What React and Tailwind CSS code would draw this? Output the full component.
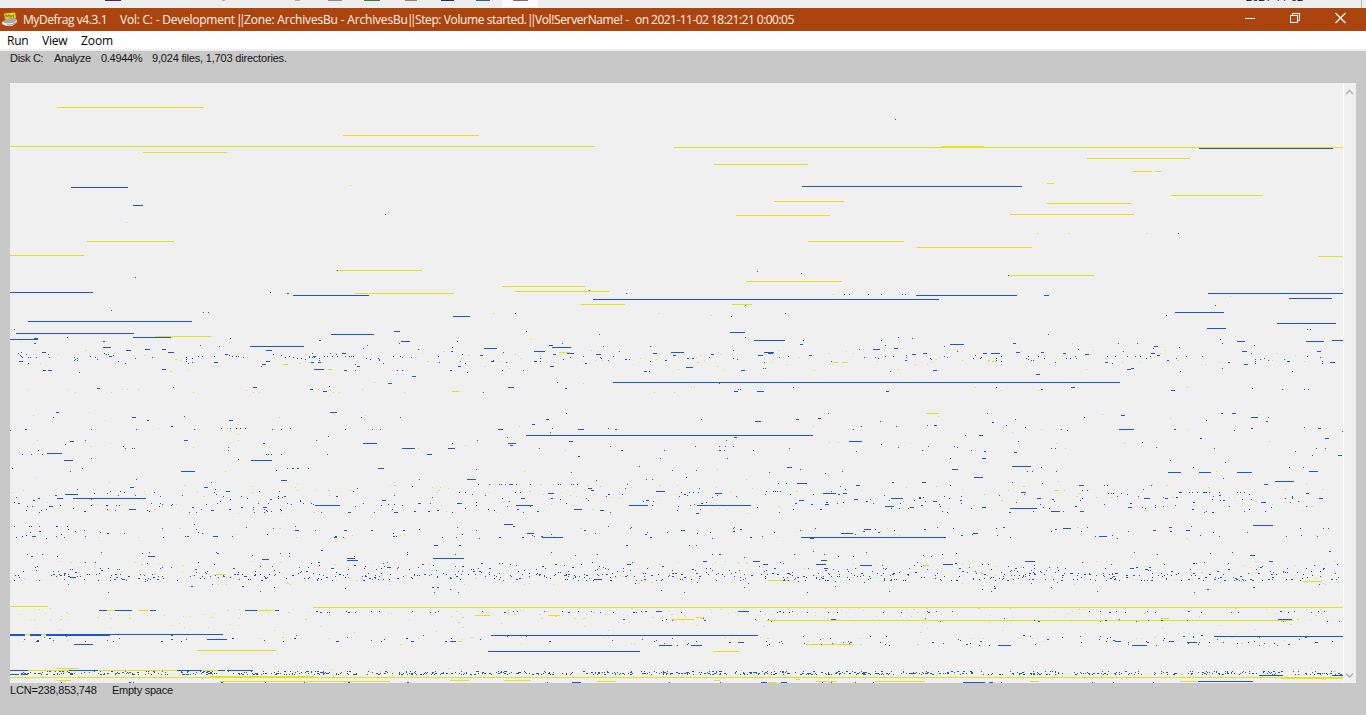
import React from "react";

/* Coordinates are in thirds of a pixel, relative to each tile's origin.
   A row is "y:mark,mark,..."; a mark is either a point or a start-end run. */
const tiles = [
  {
    x: 0,
    y: 280,
    blue: `37:30-279,811;40:861-867;46:879-1107;91:334;97:610,625;109:1359-1380;124:84-576;148:43;154:1182-1199;160:48-402;163:993-1122;172:202,399-513;175:690;178:30-114;176:102-114;181:957-963;184:309-316,1203-1230;190:102-108,1198;196:601,1102;199:658,750-912;202:309-333;205:1091;208:435-450,487-500,1255;211:379-393,798-816;214:1355;217:63,126-138,505-522;220:54,312,936,990,1026-1038;223:78,144,318,324,675-684,819,1010;226:60,339,687,843;229:63,271,327-336,595,606,643,697,709,715,867,927,939-948,972,981,996,1011,1035,1047,1053,1059,1180,1201,1315;232:66,84,90,108,147,222,285,457,558,729,855,880,927,937,942,1206,1234;235:231,406,577,891,903,957,1098,1135;238:225,291,559,915,1111,1137;241:222,231,957,1138;244:57-69,354,559,798-810;247:576,642-654,933-942,954-963,1318;250:84,375,565,1149;253:786-798,1065;259:783,1071-1080,1375;268:486-498,942-972;271:129-138,144-156,1032-1041,1066,1192,1207,1350;277:238;289:1236-1248;310:1164-1176;319:988;322:520,759-771;325:291-300;328:930-939;334:969-981;397:168-177,990-1011;409:553;412:160,396-408,1084,1201;421:441-447,687-699;439:513-519;445:664,690,708,721,736,870;448:76-81,274,409,583,816,844,1036,1117,1141;451:30;469:985;481:552-564,949,255;484:210-222;490:1089-1131,789-796;493:196;499:370;502:685;505:376,397,403,1206-1245,1344-1365;511:114,685;520:141-186;523:67,94,126,799,805,814,844,982,1281-1296;535:274;538:715;541:192-219,753-816;565:37,248,862,877-884,892-899,925,1134-1152;571:829;574:211,543-585;598:409,1258;601:843-861;607:634;619:1237;622:390-402,612-624;625:1072;628:232,645;634:331,361,678-690,778,838,1060;637:374,463,642;640:283,321;643:195-234;646:405,547,1184;649:1010-1015,669,835;655:118,174-189,220-438`,
    yellow: `40:1066-1362;169:466-634;187:65;217:326;226:433;238:528;241:542;253:850-865;268:985-997;274:510-517;271:565;307:1123;328:84,205,367,383,416,955,968,1087;331:739;334:1356-1378;337:226,333,580,760,778,1000,1018,1213;397:268;406:101,1096;412:838;421:317;433:712-719;445:475,682,715;463:714;481:112,716;490:331;499:273;502:579,809;505:1255;574:675;592:107;607:327,1183;631:71,893,945,985-992,1050;637:35,758,1311;646:148,989`,
  },
  {
    x: 450,
    y: 280,
    blue: `31:418;40:529;43:1184,1197,1255,1294,1357,1366;58:429-1380;76:885;100:196,1006;109:9-60,844;154:229;157:840-885;163:447;172:886,1345;181:912-1005,1061,1294;184:22;190:336;193:1052-1061;196:297-309,1307;199:460,601;202:306-363,7;205:102-141,1333-1345;208:1229,1269-1290;211:850;214:3-9,252-285,508;217:160,663-702,942-972;220:351-372,609-621,955-970;223:36,309-318,438-453,783-792;226:90-99,669-678,925-939,1077-1086;229:400,490,1014,1306,1330;232:360,450,777,988,1243,1276;235:271,453,712-718,726-733,849,1285;238:339,525-531,537,861;241:130,474,645-650,1367;244:30,123-133,252-261,270,601,1144;247:168,942;250:45,405-411;259:24-33,300-312;262:708-729;265:939,946;271:156,220,873-885,4;274:582-591,597,1322;277:52;307:322,489-1380;310:808;322:174-192,1030;325:345-351;328:865,871;334:852-864,921-942,1308-1317;337:100;400:348,1135;415:1104-1113;418:290-299,754,1038-1047;424:915-933,1291;433:246-255;439:1234,1339;445:307,475;448:144-159,384-402,496-502,1210;457:301;466:228-1089;472:171,852-861;481:83,828;484:358-369,1197-1236;490:174-198,7;493:1294;496:180-189;499:481,736,807,826,850;502:1345;505:0-15,268,1018;511:513-519,643,807-813,823,910;514:1219;529:384-390;535:631,831;559:568;562:1011-1026;568:79,1051;571:667,739;574:1177;577:364,957;580:1126;592:708;598:51-78,589,606;601:439;607:1326-1332;610:985,1008,1041-1071;613:85,117,147,153,165,177-189,198,240,324,330,363,369,382,532;616:1218-1230;619:1171;625:414-426,526,748;628:1187;631:423-432;634:618-645,950,970,976,982,990,1143;637:27,45,196,211,694,718,730,745;640:294-312,795-816,1119-1158,1179-1191;643:517;646:803;649:469,858;655:213-225,1324-1359`,
    yellow: `4:890-1176;19:157-405;34:195-481;40:0-12;43:1150;73:393-526,846-906;100:130,628;106:784;178:240;211:424,988;217:327-360;220:1136;223:196;247:288,313,743-749,765,963,1150-1166,1178-1196;253:550,600,1008;259:104,803;265:179;268:685,1344;271:820,1093;310:401;322:723,733,1045;334:6-28;337:612,674;439:209,1090;487:1138,1165;496:45;511:345;574:222;568:802;598:890;613:135,208,310;619:450;637:118,333;646:362,422;625:908`,
  },
  {
    x: 906,
    y: 280,
    blue: `40:906-1311;46:30-333,414-429;55:1149-1278;58:0-99;76:928;97:807-954;106:781;130:1113-1290;145:903-960;148:1204,1213;163:427;175:19;178:943;181:1278-1311;184:993-1017,1200-1254;190:321-330,637,694,949;193:132-174;196:1046;199:114,744-756;202:820;205:741;208:517;214:154,651,1008-1023,1233-1245;217:330-342,405-414;220:51-63,231-243,255-282,471-480,735-747,1036;223:18-30,537-549;226:0,207,753-762;229:114,285,366,398,507,603,627,663,687,703,732,840,889,1203;232:0,123,225,1242;235:72,202,222,270,361,415,480,493,511,720,811,1075;238:75,367,1047,1063,1134;241:0,270,376,382,783-789,1087;244:285,1047,1143-1152,1248;247:447,597-606,966-972,1272-1287;250:618,1047,1248;253:1014-1026;265:675-684,948;268:663-675;271:81-93;274:823,1159;283:390-402;307:0-642;322:495-507,270;325:1038;328:405-411,1129,1196,1207;331:795-807;400:243,945-951,978-990;406:645-657;412:534,1035-1056,1087;418:327;421:900;424:1080-1086;427:258-264;436:84-93,64,300;442:358,1195;445:1036-1042,1236-1245;448:466,639-684,804-810;451:484,985;454:1309;466:177,219-231;475:882-888,1257-1269;484:337;487:709;499:145,66;502:154,751;505:436,447,925,1230,1258;511:48,196;514:234-240,1167;517:324-333;526:1218,1297-1308;535:228-240,133;541:793;547:958;559:318-375;562:406,862,1150,1192;568:138-156;574:363,379,451,1209-1236;577:786-825,879-915,993-1038;592:204-231;595:952;604:1107-1164;607:48-60,319;610:409;613:1074-1086;616:132,519-534,595,604,736;628:711;631:529,544;637:345-360,819-828,849,858,873,891-903,910,939,993,1002,1014;640:606,615,621,645,1200-1209;646:280;652:39-45,771;655:129,393-405,716-733,777-786,1137,1158,1239-1251`,
    yellow: `49:973;190:498;241:168,246-252;244:258-270;253:28,430;220:1112;247:648,700;268:540;322:208,843;331:285,396;400:60-100;403:588,1061;409:96;415:792;445:1262;448:406,843;457:320;484:1091;490:12,450,654;505:477;568:878;574:932;604:456;619:91;628:1138,1252;631:445-460,476,308;643:234;652:572`,
  },
  {
    x: 0,
    y: 495,
    blue: `10:114,172-189,220-438,741,835;16:1146-1158;25:480,775,805,862,909,933,1090,1254-1263,1290,1375;28:486,516,874,939,1182;31:513,946-1020,1208;34:81,96,148-159,477;37:726,759,790-802;43:387-408,760,793;46:78,345,633-642,843;52:1044-1053,1182-1194;88:583;94:42,88,118,169-175,202;97:739;100:487;106:885-897,946,1032-1041,1114-1121;115:373;124:96-108,168,257,562,640-651,1180-1187;127:490,1002-1011,1030,1327,1369;151:1303-1314;166:965-971;172:304,1222;178:82;184:172,444-465;190:1041-1064,1299-1380;193:786-806;196:1041-1074;217:1161-1173;247:210-227;346:297-320,347-399,450-467,736-771,825-837;418:30-76,90-123,140-672;421:30-76,90-123,140-333;433:621-681;448:222-279;439:109-118,1010-1019,1234-1242,1353-1368;526:30-84,207-295,533-609,655-675,683-760;538:30-57,63-84`,
    yellow: `238:649-678;334:30-144;337:940-1380;346:320-347,419-446,771-825;418:76-90,123-140,368-381,459-467;466:592-828;520:168-237;526:84-207,295-533,609-655;547:30-1380;544:628-942;556:172-214;559:657-1170;558:769-824`,
  },
  {
    x: 450,
    y: 495,
    blue: `10:213-225,1324-1359;13:1212-1224;16:588-597,1047-1062;25:21-36;28:1125-1137;31:199-249,537-594,741-903;34:1305-1332;43:372-396;46:450-462;55:738-747;88:162-189;103:1242-1263;106:402-408,693-705;115:231-252,1173-1209;127:147-153,276-339,1053-1380;130:1080-1092;151:27-33,528-534,717,738;190:0-42;196:1114-1131;199:759-771,909-930;208:939-954,1098-1128;211:1230-1266;220:1122-1134;253:432-456;349:573,586-592,618-636,866-900;373:1143-1158;421:123-924;442:864-882;439:0-18;451:627-666,723-756;469:114-570;562:372-393,933-951,993-1010`,
    yellow: `256:954-1020;337:0-1380;361:77-122,295-330;367:740-765;373:666-732;376:948-1380;439:24-36;448:1068-1212;469:789-867;547:0-1380;553:1040-1052;556:0-57,162-243,793-812;559:441-498,1098-1160,1276-1380;563:954-978`,
  },
  {
    x: 906,
    y: 495,
    blue: `10:39-45,393-405,716-733,777-786,1137,1239-1251;19:81-93;22:1065-1080;37:12-24,228-240,666-678;40:312-393;49:435-462,522-534;91:1041-1101;97:789-798;100:471-495;106:741-750,840-852;115:201-215;124:579-603;127:0-120;181:1032-1047;199:357-387,1089-1101;208:111-141;373:1116-1158;424:924-1311;439:627-645,789-803;442:843-873;451:276-315,678-723;541:1060-1131,1278-1311;559:876-1041;562:171-237,249-261`,
    yellow: `211:52-69;259:1191-1248;337:0-1311;376:0-1165;370:763-791;547:0-1311;550:1126-1311;559:0-57,372-400,824-876`,
  },
  {
    x: 0,
    y: 0,
    blue: `445:3598-3999;559:2407-3066;562:213-384;616:399-429;358:2686;643:1156;700:3535;832:407;811:1012;814:2272;820:2404;826:3025`,
    yellow: `322:171-612;406:1029-1437;439:30-1785,2823-2952;442:2022-4029;457:429-681;475:3261-3570;493:2142-2424;514:3399-3456,3465-3483;550:3141-3162;556:1052;586:3513-3789;604:2322-2532;610:3141-3393;643:3030-3402;646:2208-2490;667:378;700:3111,3204,3442;724:261-522,2424-2712;742:2751-3096;766:30-252;769:3954-4029;811:1008-1266;826:3027-3282;844:2241-2526`,
  },
];

/* Scattered single clusters: [first row, last row, count, seed, from x, to x] */
const blueBands = [
  [494, 502, 75, 11, 12, 1341],
  [503, 512, 105, 12, 12, 1341],
  [526, 538, 95, 13, 12, 1341],
  [551, 557, 34, 14, 12, 1341],
  [562, 567, 75, 15, 20, 1341],
  [568, 572, 140, 16, 12, 1341],
  [573, 576, 250, 17, 12, 1341],
  [577, 580, 220, 18, 12, 1341],
  [581, 592, 38, 19, 12, 1341],
  [611, 612, 60, 20, 310, 1341],
  [618, 621, 24, 21, 560, 1341],
  [635, 641, 70, 22, 12, 1341],
  [641, 645, 55, 23, 650, 1341],
  [671, 673, 400, 24, 12, 1341],
  [673, 674, 380, 25, 12, 1341],
  [682, 682, 20, 26, 12, 1341],
];

const yellowBands = [
  [350, 364, 70, 31, 12, 1341],
  [484, 498, 60, 32, 12, 1341],
  [500, 513, 55, 33, 12, 1341],
  [527, 538, 30, 34, 12, 1341],
  [561, 568, 70, 35, 12, 1341],
  [572, 584, 175, 36, 12, 1341],
  [608, 620, 150, 37, 20, 1341],
  [622, 632, 30, 38, 12, 1341],
  [637, 644, 55, 39, 12, 1341],
  [668, 675, 50, 40, 12, 1341],
];

function rowsToPath(tile, rows) {
  return rows
    .split(";")
    .map((row) => {
      const [y, marks] = row.split(":");
      const py = tile.y + Math.floor(Number(y) / 3);
      return marks
        .split(",")
        .map((mark) => {
          const [a, b] = mark.split("-").map(Number);
          const start = tile.x + Math.floor(a / 3);
          const width = b ? Math.max(1, Math.round((b - a) / 3)) : 1;
          return `M${start} ${py}h${width}v1h-${width}z`;
        })
        .join("");
    })
    .join("");
}

function bandToPath([y0, y1, count, seed, x0, x1]) {
  let state = seed * 7919 + 17;
  const next = () => {
    state = (Math.imul(state, 1664525) + 1013904223) >>> 0;
    return state / 4294967296;
  };
  let d = "";
  for (let i = 0; i < count; i += 1) {
    const x = Math.floor(x0 + next() * (x1 - x0));
    const y = Math.floor(y0 + next() * (y1 - y0 + 1));
    const w = next() > 0.8 ? 2 : 1;
    d += `M${x} ${y}h${w}v1h-${w}z`;
  }
  return d;
}

const bluePath = tiles.map((t) => rowsToPath(t, t.blue)).join("");
const yellowPath = tiles.map((t) => rowsToPath(t, t.yellow)).join("");
const blueScatter = blueBands.map(bandToPath).join("");
const yellowScatter = yellowBands.map(bandToPath).join("");

function DiskMap() {
  return (
    <svg
      className="block h-[600px] w-[1333px] shrink-0"
      viewBox="10 83 1333 600"
      shapeRendering="crispEdges"
    >
      <path d={yellowScatter} fill="#e2e260" />
      <path d={yellowPath} fill="#e2e418" />
      <path d={blueScatter} fill="#2855b8" />
      <path d={bluePath} fill="#1f55c4" />
    </svg>
  );
}

function AppIcon() {
  return (
    <svg className="h-[16px] w-[16px] shrink-0" viewBox="0 0 16 16">
      <path d="M0 10 4 7l9-1 2 2v2l-5 4H5l-5-2z" fill="#aaa9a3" />
      <path d="m0 10 5 1.500 6-.5 4-3v2l-5 4H5l-5-2z" fill="#efefeb" />
      <path d="m5 13 5-.2 3.500-2.500" fill="none" stroke="#77736d" strokeWidth=".8" />
      <path d="M2 1.500 13 .5l1 5.500-11 1z" fill="#e7df22" />
      <path
        d="M4 5.500v-3l1.500 2 1.500-2v3M8.300 3l1 2 1-2M9.300 5l-.7 1.200M11.500 2.500v3h1"
        fill="none"
        stroke="#5b5b12"
        strokeWidth=".8"
      />
    </svg>
  );
}

function Bars() {
  return <span className="w-[6px] shrink-0 -indent-[2px] tracking-[-3.6px]">||</span>;
}

function Titlebar() {
  return (
    <header className="flex h-[23px] items-center bg-[#ab440f] pl-[2px] text-[12px] leading-[23px] whitespace-pre text-[#fff4ec]">
      <AppIcon />
      <span className="ml-[5px] w-[97px] tracking-[-0.42px]">MyDefrag v4.3.1</span>
      <span className="w-[118px] tracking-[-0.23px]">Vol: C: - Development</span>
      <Bars />
      <span className="w-[165px] tracking-[-0.18px]">Zone: ArchivesBu - ArchivesBu</span>
      <Bars />
      <span className="w-[114px] tracking-[-0.4px]">Step: Volume started.</span>
      <Bars />
      <span className="w-[100px] tracking-[-0.38px]">Vol!ServerName! -</span>
      <span className="tracking-[-0.53px]">on 2021-11-02 18:21:21 0:00:05</span>
      <div className="mr-[20px] ml-auto flex items-center gap-[35px] pb-[3px]">
        <svg className="h-[12px] w-[10px]" viewBox="0 0 10 12" shapeRendering="crispEdges">
          <path d="M0 6.500h10" stroke="#fff" />
        </svg>
        <svg className="h-[12px] w-[10px]" viewBox="0 0 10 12" fill="none" stroke="#fff" shapeRendering="crispEdges">
          <path d="M.5 3.500h7v7h-7zM2.500 3.500v-2h7v7h-2" />
        </svg>
        <svg className="h-[12px] w-[11px]" viewBox="0 0 11 12" fill="none" stroke="#fff" strokeWidth="1.200">
          <path d="m.5 1 10 10m0-10-10 10" />
        </svg>
      </div>
    </header>
  );
}

function DesktopStrip() {
  return (
    <div className="flex h-[8px] items-start overflow-hidden bg-[#eeeeef]">
      <i className="ml-[105px] h-px w-[16px] bg-[#4b2263]" />
      <i className="ml-[101px] h-px w-[3px] bg-[#b7b7b7]" />
      <i className="ml-[70px] h-px w-[5px] bg-[#b8aa9b]" />
      <i className="ml-[28px] h-px w-[14px] bg-[#8c8c8c]" />
      <i className="ml-[22px] h-px w-[16px] bg-[#3f7a48]" />
      <i className="ml-[25px] h-px w-[12px] bg-[#8d8377]" />
      <i className="ml-[24px] h-px w-[13px] bg-[#1f2d66]" />
      <i className="ml-[22px] h-px w-[14px] bg-[#2e6797]" />
      <div className="ml-[12px] flex h-[8px] w-[36px] justify-center bg-[#fafafa]">
        <i className="h-px w-[15px] bg-[#777078]" />
      </div>
      <div className="ml-auto flex h-[2px] w-[115px] items-end overflow-hidden text-[11px] leading-[10px] text-black">
        <span className="h-[10px]">2021-11-02</span>
      </div>
      <i className="mr-[4px] h-[8px] w-px bg-[#bdbdbd]" />
    </div>
  );
}

function Scrollbar() {
  return (
    <div className="flex h-full w-[13px] flex-col items-center justify-between border-l border-white bg-[#f0f0f0] pt-[5px] pr-[1px] pb-[3px]">
      <svg className="h-[8px] w-[9px]" viewBox="0 0 9 8" fill="none" stroke="#b8b8b8" strokeWidth="1.700">
        <path d="M1 6 4.500 2.500 8 6" />
      </svg>
      <svg className="h-[8px] w-[9px]" viewBox="0 0 9 8" fill="none" stroke="#b8b8b8" strokeWidth="1.700">
        <path d="M1 1.500 4.500 5 8 1.500" />
      </svg>
    </div>
  );
}

export default function App() {
  return (
    <div className="flex h-[715px] w-[1366px] flex-col overflow-hidden bg-[#c8c8c8] font-['Open_Sans','Noto_Sans',sans-serif]">
      <DesktopStrip />
      <Titlebar />
      <nav className="flex h-[20px] border-b-2 border-[#eeeeee] bg-white pl-[7px] text-[12px] leading-[19px] text-black">
        <span className="w-[35px] tracking-[-0.2px]">Run</span>
        <span className="w-[39px] tracking-[-0.2px]">View</span>
        <span className="tracking-[-0.1px]">Zoom</span>
      </nav>
      <div className="flex h-[32px] pl-[10px] font-['Liberation_Sans',Arial,sans-serif] text-[11px] leading-[14px] whitespace-pre text-[#151515]">
        <span className="w-[44px] tracking-[-0.3px]">Disk C:</span>
        <span className="w-[47px] tracking-[-0.35px]">Analyze</span>
        <span className="w-[51px] tracking-[-0.3px]">0.4944%</span>
        <span className="tracking-[-0.19px]">9,024 files, 1,703 directories.</span>
      </div>
      <main className="ml-[10px] flex h-[600px] w-[1346px] bg-[#f0f0f0]">
        <DiskMap />
        <Scrollbar />
      </main>
      <footer className="flex pl-[10px] font-['Liberation_Sans',Arial,sans-serif] text-[11px] leading-[14px] text-[#151515]">
        <span className="w-[102px] tracking-[-0.2px]">LCN=238,853,748</span>
        <span className="tracking-[-0.25px]">Empty space</span>
      </footer>
    </div>
  );
}
